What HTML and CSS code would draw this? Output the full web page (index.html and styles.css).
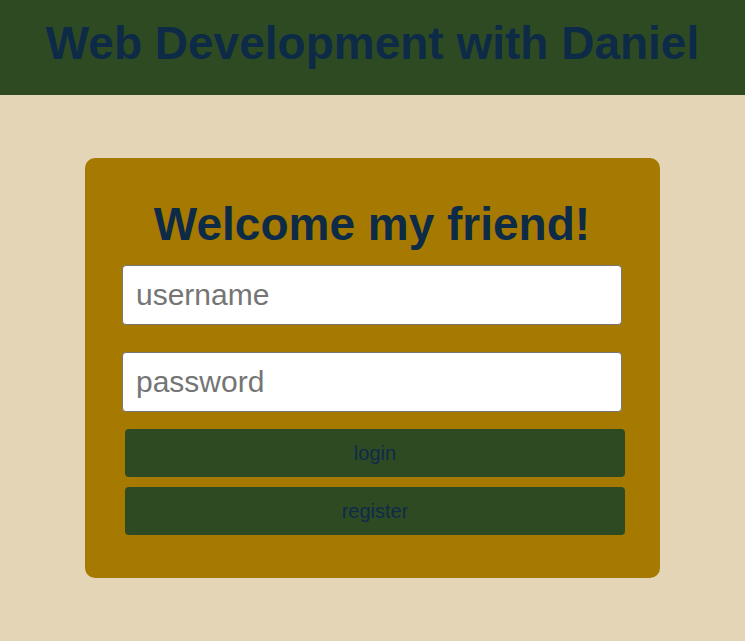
FILE: index.html
```html
<!DOCTYPE html>
<html lang="en">
<head>
<meta charset="utf-8">
<title>Web Development with Daniel</title>
<link rel="stylesheet" href="styles.css">
</head>
<body>
<header class="site-header">
  <h1 class="site-title">Web Development with Daniel</h1>
</header>
<main class="page">
  <form class="card" onsubmit="return false">
    <h2 class="card-title">Welcome my friend!</h2>
    <input class="field" type="text" placeholder="username">
    <input class="field field-gap" type="password" placeholder="password">
    <button class="btn btn-first" type="button">login</button>
    <button class="btn" type="button">register</button>
  </form>
</main>
</body>
</html>
```
FILE: styles.css
```css
html, body {
  margin: 0;
  padding: 0;
}
body {
  background: #e3d5b5;
  font-family: "Liberation Sans", Arial, sans-serif;
  min-height: 641px;
}
.site-header {
  background: #2e4a23;
  height: 95px;
  box-sizing: border-box;
  padding-top: 20px;
}
.site-title {
  margin: 0;
  text-align: center;
  font-size: 46px;
  line-height: 46px;
  font-weight: bold;
  color: #0d2a47;
}
.page {
  padding-top: 63px;
  display: flex;
  justify-content: center;
}
.card {
  width: 575px;
  box-sizing: border-box;
  background: #a67a00;
  border-radius: 10px;
  padding: 43px 38px 43px 37px;
  display: flex;
  flex-direction: column;
}
.card-title {
  margin: 0 0 18px 0;
  text-align: center;
  font-size: 46px;
  line-height: 46px;
  font-weight: bold;
  color: #0d2a47;
}
.field {
  box-sizing: border-box;
  width: 500px;
  height: 60px;
  margin: 0;
  padding: 0 13px;
  border: 1px solid #767676;
  border-radius: 4px;
  background: #fff;
  font-family: "Liberation Sans", Arial, sans-serif;
  font-size: 30px;
  color: #333;
  outline: none;
}
.field::placeholder {
  color: #757575;
}
.field-gap {
  margin-top: 27px;
}
.btn {
  box-sizing: border-box;
  width: 500px;
  height: 48px;
  margin: 10px 0 0 3px;
  padding: 0;
  border: none;
  border-radius: 4px;
  background: #2e4a23;
  color: #0f2a4a;
  font-family: "Liberation Sans", Arial, sans-serif;
  font-size: 20px;
  cursor: pointer;
}
.btn-first {
  margin-top: 17px;
}
```
